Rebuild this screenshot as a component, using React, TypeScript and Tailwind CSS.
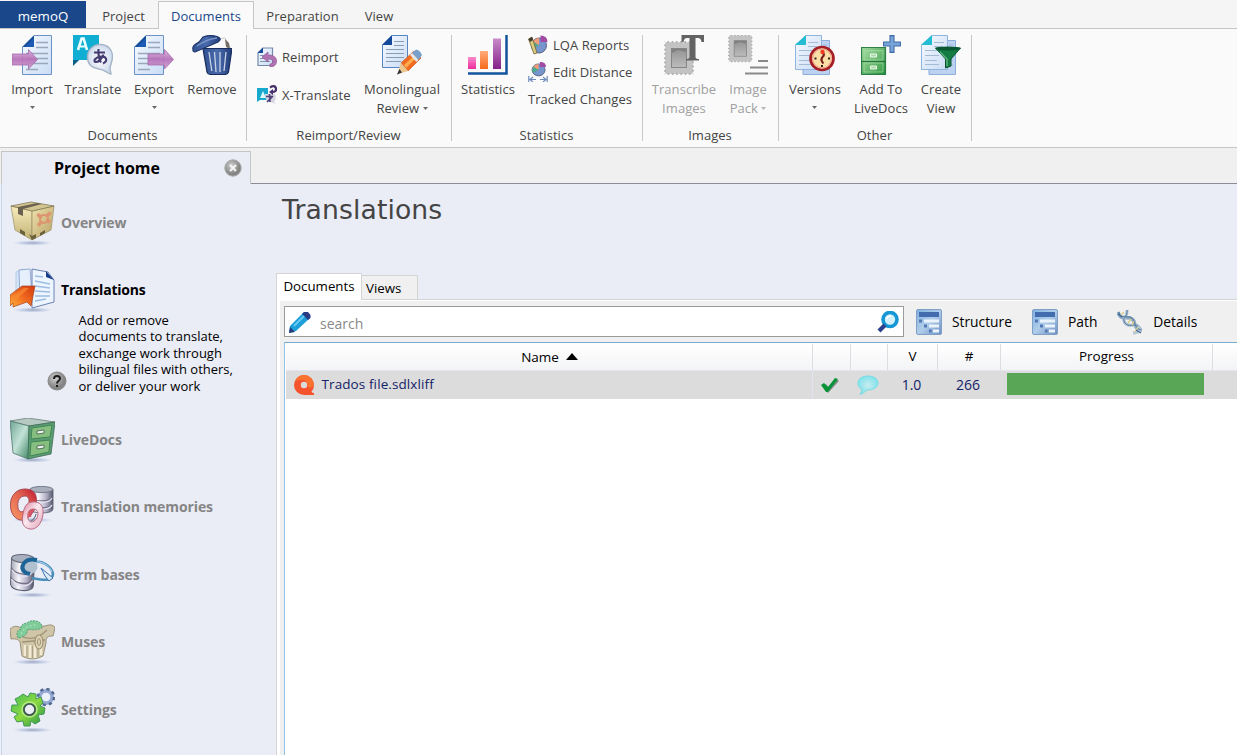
import React from "react";

type Kids = { children?: React.ReactNode };

/* ---------- gradients shared by the icons ---------- */
function Defs() {
  return (
    <svg width="0" height="0" className="absolute" aria-hidden="true">
      <defs>
        <linearGradient id="paper" x1="0" y1="0" x2="1" y2="1"><stop offset="0" stopColor="#f6faff" /><stop offset="1" stopColor="#c9dcf5" /></linearGradient>
        <linearGradient id="purple" x1="0" y1="0" x2="0" y2="1"><stop offset="0" stopColor="#dfb3dc" /><stop offset=".5" stopColor="#b56fb7" /><stop offset="1" stopColor="#cf9fd0" /></linearGradient>
        <linearGradient id="bar1" x1="0" y1="0" x2="0" y2="1"><stop offset="0" stopColor="#f78ccb" /><stop offset="1" stopColor="#ee2d9f" /></linearGradient>
        <linearGradient id="bar2" x1="0" y1="0" x2="0" y2="1"><stop offset="0" stopColor="#ffab7c" /><stop offset="1" stopColor="#f56a1c" /></linearGradient>
        <linearGradient id="bar3" x1="0" y1="0" x2="0" y2="1"><stop offset="0" stopColor="#c98cc9" /><stop offset="1" stopColor="#85208a" /></linearGradient>
        <linearGradient id="bin" x1="0" y1="0" x2="1" y2="0"><stop offset="0" stopColor="#31508f" /><stop offset=".5" stopColor="#4a6bac" /><stop offset="1" stopColor="#223c78" /></linearGradient>
        <linearGradient id="green" x1="0" y1="0" x2="1" y2="1"><stop offset="0" stopColor="#a3dba0" /><stop offset="1" stopColor="#1f8a36" /></linearGradient>
        <linearGradient id="drawer" x1="0" y1="0" x2="1" y2="1"><stop offset="0" stopColor="#9ed79c" /><stop offset="1" stopColor="#3fa04d" /></linearGradient>
        <linearGradient id="gear" x1="0" y1="0" x2="1" y2="1"><stop offset="0" stopColor="#47bf57" /><stop offset=".5" stopColor="#8cd840" /><stop offset="1" stopColor="#239348" /></linearGradient>
        <linearGradient id="metal" x1="0" y1="0" x2="1" y2="0"><stop offset="0" stopColor="#a9a9b8" /><stop offset=".35" stopColor="#f8f8fc" /><stop offset=".7" stopColor="#b3b1c6" /><stop offset="1" stopColor="#53566a" /></linearGradient>
        <linearGradient id="boxL" x1="0" y1="0" x2="0" y2="1"><stop offset="0" stopColor="#f7edbc" /><stop offset="1" stopColor="#c1b174" /></linearGradient>
        <linearGradient id="boxR" x1="0" y1="0" x2="1" y2="1"><stop offset="0" stopColor="#efe0ab" /><stop offset="1" stopColor="#b6a266" /></linearGradient>
        <linearGradient id="cabL" x1="0" y1="0" x2="1" y2="1"><stop offset="0" stopColor="#6fa595" /><stop offset=".5" stopColor="#c3e2d7" /><stop offset="1" stopColor="#3f8764" /></linearGradient>
        <linearGradient id="orange" x1="0" y1="1" x2="1" y2="0"><stop offset="0" stopColor="#ffb13b" /><stop offset=".5" stopColor="#f0691e" /><stop offset="1" stopColor="#d23a12" /></linearGradient>
        <linearGradient id="ring" x1="0" y1="1" x2="1" y2="0"><stop offset="0" stopColor="#fa9b66" /><stop offset=".6" stopColor="#e0604f" /><stop offset="1" stopColor="#c0142f" /></linearGradient>
        <linearGradient id="ring2" x1="0" y1="0" x2="1" y2="1"><stop offset="0" stopColor="#dd7f9b" /><stop offset=".45" stopColor="#faeaf0" /><stop offset="1" stopColor="#e2a0b6" /></linearGradient>
        <linearGradient id="tree" x1="0" y1="0" x2="1" y2="1"><stop offset="0" stopColor="#7fb0e0" /><stop offset=".5" stopColor="#b0cdea" /><stop offset="1" stopColor="#6a8fc2" /></linearGradient>
        <linearGradient id="stamp" x1="0" y1="0" x2="0" y2="1"><stop offset="0" stopColor="#929292" /><stop offset="1" stopColor="#bcbcbc" /></linearGradient>
        <radialGradient id="bubble"><stop offset="0" stopColor="#ffffff" /><stop offset="1" stopColor="#cfdcee" /></radialGradient>
        <radialGradient id="gray" cx=".4" cy=".35"><stop offset="0" stopColor="#d0d0d0" /><stop offset="1" stopColor="#858585" /></radialGradient>
        <radialGradient id="shadow"><stop offset="0" stopColor="#8e93ac" stopOpacity=".8" /><stop offset=".6" stopColor="#b4c5e2" stopOpacity=".6" /><stop offset="1" stopColor="#c8d2ea" stopOpacity="0" /></radialGradient>
        <radialGradient id="aqua"><stop offset="0" stopColor="#c9ecf0" /><stop offset="1" stopColor="#82e2ea" /></radialGradient>
      </defs>
    </svg>
  );
}

const Big = ({ children }: Kids) => <svg viewBox="0 0 40 40" className="block h-10 w-10 shrink-0">{children}</svg>;
const Small = ({ children }: Kids) => <svg viewBox="0 0 20 20" className="block h-5 w-5 shrink-0">{children}</svg>;
const Nav = ({ children, low }: Kids & { low?: boolean }) => (
  <svg viewBox="0 0 45 45" className="block h-[45px] w-[45px] shrink-0">
    <ellipse cx="22.5" cy={low ? 35 : 42} rx="20" ry="2.600" fill="url(#shadow)" />
    {children}
  </svg>
);

/* ---------- ribbon icons ---------- */
const Page = ({ x = 10 }: { x?: number }) => (
  <g transform={`translate(${x} 0)`}>
    <path d="M12 .5H29.5V39.5H.5V12Z" fill="url(#paper)" stroke="#6d93c6" />
    <path d="M12 .5V12H.5Z" fill="#12499b" />
    <path d="M3 12 12 3V12Z" fill="#1d5cb4" />
    <path d="M14 7.500h12M14 12.500h12M4 18.500h22M4 23.500h22M4 28.500h22M4 34.500h12" stroke="#9aa7bb" strokeWidth="1.500" />
  </g>
);
const Arrow = () => <path d="M0 19H16.500V14.500L25.500 24.500 16.500 34V30H0Z" fill="url(#purple)" stroke="#a66bad" strokeWidth=".8" fillOpacity=".93" />;

const ImportIcon = () => <Big><Page /><Arrow /></Big>;
const ExportIcon = () => <Big><Page x={0} /><g transform="translate(14 0)"><Arrow /></g></Big>;

const TranslateIcon = () => (
  <Big>
    <path d="M0 0H26V25H6L0 30Z" fill="#10aed2" /><path d="M0 25H6L0 31Z" fill="#0b5e87" />
    <path d="M5 15 8.600 3.500h2L14 15" fill="none" stroke="#e9ffff" strokeWidth="2.600" /><path d="M7 11.500h5.500" stroke="#e9ffff" strokeWidth="2" />
    <path d="M27 9.500C35 9.500 39.500 15 39.500 21.500 39.500 27 37 30 37 34L38 39C34 38.500 32 34.500 26 34 19 33 14.500 29 14.500 22 14.500 15 20 9.500 27 9.500Z" fill="url(#bubble)" stroke="#a6b4c7" strokeWidth="1.400" />
    <path d="M21 17.500h11M25.500 14C25 20 26 24 28 27.500M30.500 19.500C29 24 25 27.500 22.500 27 20 26.500 22 22 28 21.500 34 21 35 26.500 30 28.500" fill="none" stroke="#433b70" strokeWidth="2.100" />
  </Big>
);
const RemoveIcon = () => (
  <Big>
    <path d="M12 14 20 5 33 3 39 14Z" fill="#fafafa" stroke="#c3c3c3" strokeWidth=".8" /><path d="M33 4 37 8 38 14 34 12Z" fill="#776e66" />
    <path d="M11 13.500H40L36.500 37Q36 39.500 32 39.500H20Q15.500 39.500 15 37Z" fill="url(#bin)" stroke="#172c5b" strokeWidth="1.200" />
    <path d="M17 17 19.800 36M22.500 17 24 37M28 17V37M34 17 32 36" stroke="#c9d4e8" strokeWidth="1.300" />
    <path d="M1 14Q-.500 11 7 7L11 2Q18-.500 25 1.500 31 3.500 26 7L3 17Q.5 17 1 14Z" fill="url(#bin)" stroke="#1c3267" strokeWidth="1.100" />
    <path d="M5 11Q15 4 25 3" stroke="#7c97cb" strokeWidth="1.300" fill="none" />
  </Big>
);
const ReimportIcon = () => (
  <Small>
    <path d="M6 1H15.500V18.500H1V6Z" fill="url(#paper)" stroke="#7489ab" strokeWidth="1.200" /><path d="M6 .5V6H.5Z" fill="#164b9b" />
    <path d="M3 8.500h10M3 11.500h10M3 14.500h10" stroke="#8293ac" />
    <path d="M5 10 11 5V8C17 8 19.500 10.500 19.500 14 19.500 18 17 20 13 20V17Q16 17 16 14.500 16 12 11 12V15Z" fill="#b372b4" stroke="#8f5a97" strokeWidth=".7" />
  </Small>
);
const XTranslateIcon = () => (
  <Small>
    <path d="M0 3H11V15H3L0 17Z" fill="#17a8cd" /><path d="M3 13 6 6 9 13Z" fill="#dcf9ff" />
    <path d="M8 9H18Q20 13 17 17L19 19 13 17Q8 16 8 9Z" fill="#d7d5e3" /><path d="M9 11.500h7M12.500 9 13 17M16 11 10 17" stroke="#50447b" strokeWidth="1.700" />
    <path d="M13 2.500Q18-.5 19 3.500 19.500 7 15 7" fill="none" stroke="#47326c" strokeWidth="2.300" /><path d="M16 4V10L12 7Z" fill="#47326c" />
  </Small>
);
const ReviewIcon = () => (
  <Big>
    <path d="M10 .500H25.500V32.500H.500V10Z" fill="url(#paper)" stroke="#5585c0" /><path d="M10 0V10H0Z" fill="#144a99" />
    <path d="M12 6.500h10M12 10.500h10M4 14.500h18M4 18.500h18M4 22.500h18M4 26.500h15" stroke="#8a9db6" strokeWidth="1.200" />
    <path d="M19 28 32 16 39 23 26 36Z" fill="#f26b21" stroke="#c5571f" strokeWidth=".7" /><path d="M22 30 34 19 36 21 24 33Z" fill="#ffac4d" />
    <path d="M19 28 26 36 15 39.500Z" fill="#edc78f" /><path d="M17.500 34 20 37.500 15 39.500Z" fill="#30363f" />
    <path d="M30 18 34 14.500Q38 15 40 20L36.500 25Z" fill="#799fcb" /><path d="M30 18 36.500 25 34.500 27 28 20Z" fill="#dfe7f1" />
  </Big>
);
const StatsIcon = () => (
  <Big>
    <path d="M0 22H8V34H0Z" fill="url(#bar1)" /><path d="M12 16H20V34H12Z" fill="url(#bar2)" /><path d="M25 3.500H33V34H25Z" fill="url(#bar3)" />
    <path d="M38.500 0V38.500H0" fill="none" stroke="#12539e" strokeWidth="2.500" />
  </Big>
);
const Pie = () => (
  <>
    <circle cx="11" cy="10.500" r="7.500" fill="#7595cc" stroke="#4d5475" strokeWidth=".9" />
    <path d="M11 10.500V3A7.500 7.500 0 0 0 5 6.500Z" fill="#f39b74" /><path d="M11 10.500 5 6.500A7.500 7.500 0 0 0 4.500 14Z" fill="#52a88a" />
    <path d="M12.500 7V.500Q19.500 .500 19.500 7Z" fill="#a24ba4" />
  </>
);
const LqaIcon = () => <Small><Pie /><path d="M.500 4 4 2 9 18 6 19Z" fill="#dccc7c" stroke="#6d623c" strokeWidth=".8" /><path d="M.500 4 4 2 5 5 2 7Z" fill="#423a30" /></Small>;
const EditIcon = () => <Small><g transform="translate(1 -.500) scale(.87 .8)"><Pie /></g><path d="M.800 14V20M19.200 14V20M2 17.500H8M12 17.500H18M5 15 2 17.500 5 20M15 15 18 17.500 15 20" fill="none" stroke="#6f8dbd" strokeWidth="1.200" /></Small>;

const Stamp = ({ s = 1, y = 6 }: { s?: number; y?: number }) => (
  <g transform={`translate(0 ${y}) scale(${s})`}>
    <rect x=".8" y=".8" width="28.400" height="32.400" fill="#c3c3c3" stroke="#a3a3a3" strokeWidth="1.300" />
    <rect x="0" y="0" width="30" height="34" fill="none" stroke="#fafafa" strokeWidth="3" strokeDasharray=".1 4.171" strokeDashoffset="-2" strokeLinecap="round" />
    <rect x="7.500" y="7.500" width="15" height="19" fill="url(#stamp)" stroke="#858585" /><path d="M8 12 14 9 22 11V8H8Z" fill="#808080" />
  </g>
);
const TranscribeIcon = () => <Big><Stamp /><path d="M17.500 0H40V7H37.500Q37 3 34 3H31.500V22Q31.500 24 35 24V25.500H22V24Q25.500 24 25.500 22V3H23Q20 3 19.500 7H17.500Z" fill="#636363" /></Big>;
const PackIcon = () => <Big><Stamp s={.82} y={-.5} /><path d="M30 26H40M22 32.500H40M17 38.500H40" stroke="#8a8a8a" strokeWidth="2" /></Big>;

const Pages = () => (
  <>
    <path d="M8 5.500H34.500V39.500H8Z" fill="#bdd2f1" stroke="#8daedb" />
    <path d="M11 .500H26.500V34.500H.500V10Z" fill="url(#paper)" stroke="#8fb5de" /><path d="M11 0V10H0Z" fill="#25bdd4" />
    <path d="M13 7.500h10M13 11.500h9M4 15.500h18M4 20.500h14M4 25.500h12M4 29.500h14" stroke="#a5bad3" strokeWidth="1.200" /><path d="M28 10h4M28 15h4M28 20h4M28 25h4M28 30h4" stroke="#9cb9de" />
  </>
);
const VersionsIcon = () => (
  <Big><Pages /><circle cx="27" cy="23.500" r="11.500" fill="#fbd3a1" stroke="#a51f24" strokeWidth="2.700" /><circle cx="27" cy="23.500" r="9.400" fill="#fae0a6" stroke="#f0a08e" />
    <path d="M27 17Q30.500 19.500 27.500 22 25 25 28.500 28.500" stroke="#781f1e" strokeWidth="2.200" fill="none" /><circle cx="27.500" cy="17" r="2.200" fill="#f13a24" /><path d="M19.500 23.500h2M33 23.500h2M26 31h2" stroke="#2d1e1e" strokeWidth="2" /></Big>
);
const AddIcon = () => (
  <Big>
    <path d="M.5 12.500H24.500V39.500H.500Z" fill="url(#green)" stroke="#2f8046" strokeWidth="1.200" />
    <path d="M3 15.500H22V25H3ZM3 28H22V37H3Z" fill="url(#drawer)" stroke="#a7dba5" strokeWidth=".7" /><path d="M0 26.500H25" stroke="#23733b" />
    <path d="M9.500 19h6v3h-6ZM9.500 31h6v3h-6Z" fill="#a9d8a6" stroke="#f6fff5" strokeWidth=".9" />
    <path d="M29 .600H33V7H39.400V11H33V17.400H29V11H22.600V7H29Z" fill="#76a5d9" stroke="#3f6ca5" strokeWidth="1.100" />
  </Big>
);
const ViewIcon = () => (
  <Big><Pages /><path d="M14.500 13H39.500L30 24V31L24.500 33V24Z" fill="#147b43" stroke="#0b5430" /><ellipse cx="27" cy="13.500" rx="12.500" ry="2" fill="#0b5933" /><path d="M19 17 26 24V31" stroke="#5fb57d" strokeWidth="1.400" fill="none" /></Big>
);

/* ---------- navigation icons ---------- */
const BoxIcon = () => (
  <Nav>
    <path d="M1 5 22 10V39L5 29Z" fill="url(#boxL)" stroke="#9a9168" strokeWidth=".7" /><path d="M22 10 44 5 41 29 22 39Z" fill="url(#boxR)" stroke="#9a8e62" strokeWidth=".7" />
    <path d="M1 5 21 1 44 5 22 10Z" fill="#d3c58f" stroke="#77704d" strokeWidth=".7" /><path d="M8 6 27 2 32 3 13 8V15L8 13Z" fill="#6b6150" />
    <path d="M10 28 15 31V35L10 32ZM30 32 35 29V32L30 35ZM19 33 22 35 26 33V37L22 39Z" fill="#6c613e" />
    <circle cx="34" cy="18" r="4" fill="none" stroke="#dd9470" strokeWidth="2" /><path d="M28.500 14 30.500 16M39.500 12.500 37.500 14.500M29 23.500 31 21.500M39 20.500 37.500 19.500" stroke="#dd9470" strokeWidth="3.500" strokeLinecap="round" />
  </Nav>
);
const DocsIcon = () => (
  <Nav>
    <path d="M6 4 13 1V17L6 27Z" fill="#d4e4f7" stroke="#a8c1e3" strokeWidth=".7" /><path d="M9 2 20 1 22 27 10 33Z" fill="#e6effc" stroke="#7f9bc9" strokeWidth=".8" />
    <path d="M22 1 38 4 44 12V34L22 40Z" fill="#edf5ff" stroke="#6a82b4" /><path d="M36 3 44 12 36 9Z" fill="#173d8a" />
    <path d="M25 8 33 9M25 13 40 16M25 18 40 20M25 23 40 24M25 28 40 28M25 33 36 31" stroke="#9dbce4" strokeWidth="1.300" />
    <path d="M0 27 12 18 25 18 21 38 17 34 3 39V35L0 38Z" fill="url(#orange)" stroke="#a34422" strokeWidth=".7" /><path d="M1 30 14 20 19 20 5 33Z" fill="#fa8a33" opacity=".7" />
  </Nav>
);
const CabinetIcon = () => (
  <Nav>
    <path d="M0 3 18 0 45 4 19 8Z" fill="#b5c9c2" stroke="#6a8279" strokeWidth=".8" />
    <path d="M0 3 19 8 18 41 3 35Z" fill="url(#cabL)" stroke="#4d786c" strokeWidth=".8" /><path d="M19 8 45 4 41 36 18 41Z" fill="#5a9c74" stroke="#3c6b52" strokeWidth=".8" />
    <path d="M22 10 42 7 40 19 21 21ZM21 24 40 22 39 34 20 38Z" fill="#86be80" stroke="#3c804f" strokeWidth=".9" />
    <path d="M27 13 34 12V15L27 16ZM27 28 34 27V30L27 31Z" fill="#f2f8f1" stroke="#3f5a49" strokeWidth=".8" />
  </Nav>
);
const Drum = () => (
  <><path d="M0 4V26Q1 31 12 31T23 26V4Z" fill="url(#metal)" stroke="#5b5d70" strokeWidth=".9" /><path d="M0 12Q4 17 12 17T23 12M0 20Q4 25 12 25T23 20" fill="none" stroke="#777184" strokeWidth="1.100" /><path d="M1 14Q5 19 12 19T22 14M1 22Q5 27 12 27T22 22" fill="none" stroke="#e4e0f2" strokeWidth="1.200" /><ellipse cx="11.500" cy="4" rx="11.500" ry="3.500" fill="#a9afbd" stroke="#636a7b" strokeWidth=".9" /></>
);
const MemoryIcon = () => (
  <Nav low>
    <g transform="translate(20 1) scale(1 .87)"><Drum /></g>
    <path fillRule="evenodd" d="M15 4C27 4 28 14 25 23 22 31 16 36 10 35 2 33-1 23 1 15 3 8 8 4 15 4ZM15 11C9 11 7 17 8 23 9 28 13 28 17 23 20 18 20 11 15 11Z" fill="url(#ring)" stroke="#a04450" strokeWidth=".9" />
    <path fillRule="evenodd" d="M22 17C30 16 34 21 33 29 32 39 26 45 20 44 13 43 11 37 13 29 14 22 17 17 22 17ZM23 24C18 24 17 30 18 34 20 39 25 37 27 33 29 28 28 24 23 24Z" fill="url(#ring2)" stroke="#b3607a" strokeWidth=".9" /><path d="M20 32Q20 26 24 25.500" fill="none" stroke="#d4526e" strokeWidth="2.400" /><path d="M26 29Q25 34 21 36" fill="none" stroke="#6a6d80" strokeWidth="1.200" />
  </Nav>
);
const TermIcon = () => (
  <Nav>
    <g transform="translate(1 1) scale(1 1.180) rotate(3 12 15)"><Drum /></g>
    <path d="M24 10C30 6 42 13 43 21 42 29 33 27 22 25" fill="none" stroke="#4a8fbb" strokeWidth="2.600" /><path d="M25 9.500C31 7 40 13 42 19" fill="none" stroke="#b5dbef" strokeWidth="1" />
    <circle cx="21" cy="14" r="6.500" fill="#b1c0cf" /><path d="M27 7Q18 5 14 10 10 16 16 20L20 21" fill="none" stroke="#1d6597" strokeWidth="4" /><path d="M31 15 43 25 39 28 35 23Z" fill="#dceaf6" stroke="#3a72ad" />
  </Nav>
);
const MuseIcon = () => (
  <Nav>
    <path d="M0 9Q5 4 11 8L35 6Q43 3 45 8L43 16Q35 15 36 23L33 36Q22 42 12 36L10 22Q8 18 1 19Z" fill="#cfc5a8" stroke="#958a6f" strokeWidth=".9" />
    <path d="M11 16Q24 23 37 10M12 22 35 20" fill="none" stroke="#a09476" strokeWidth="1.300" /><path d="M15 25V36M20 25V38M25 25V38M31 25V35" stroke="#f2ead3" strokeWidth="2.500" /><path d="M17 26V37M22.500 26V38M28 26V37" stroke="#aa9f82" />
    <ellipse cx="29" cy="22" rx="4" ry="7" fill="#ded5b9" stroke="#a09474" strokeWidth="1.200" /><ellipse cx="29" cy="22" rx="1.500" ry="3.500" fill="none" stroke="#a09474" /><path d="M8 18Q5 11 11 9 10 4 17 3 20 0 26 1 32 2 32 8 25 11 18 9 17 17 8 18Z" fill="#7fcc9a" stroke="#56a074" strokeDasharray="2 1" /><path d="M11 14Q15 5 27 5" fill="none" stroke="#a5e2b3" strokeWidth="1.300" strokeDasharray="2 2" />
  </Nav>
);
const SettingsIcon = () => (
  <Nav>
    <g><circle cx="36" cy="9" r="6" fill="none" stroke="#95a9d2" strokeWidth="4" /><circle cx="36" cy="9" r="8" fill="none" stroke="#536a91" strokeWidth="2.500" strokeDasharray="3.200 3.100" /><circle cx="36" cy="9" r="4.300" fill="#eaf1fb" /></g>
    <path d="M9 9 13 6 18 9 20 5 26 6 26 11 31 9 33 15 30 18 35 20 34 26 28 27 30 33 25 36 21 33 20 38 14 38 13 33 7 34 4 29 8 26 1 23 2 17 8 17 5 11Z" fill="url(#gear)" stroke="#35934f" strokeWidth=".9" strokeLinejoin="round" />
    <circle cx="19.500" cy="21.500" r="7.500" fill="#58a63f" stroke="#b9eb86" strokeWidth="1.500" /><circle cx="19.500" cy="21.500" r="5.500" fill="#eaecf6" stroke="#3d554e" strokeWidth="1.600" />
  </Nav>
);

/* ---------- toolbar icons ---------- */
const TreeIcon = () => (
  <svg viewBox="0 0 26 26" className="block h-[26px] w-[26px] shrink-0">
    <rect x=".5" y=".500" width="25" height="25" rx="1.500" fill="url(#tree)" stroke="#7f9fc6" /><rect x="3" y="3" width="20" height="5" fill="#426cae" />
    <path d="M8 10.500H23V13.500H8ZM13 15.500H23V18.500H13ZM17 20.500H23V23.500H17Z" fill="#eaf3fb" /><path d="M3 10.500H6V13.500H3ZM8 15.500H11V18.500H8ZM13 20.500H15.500V23.500H13Z" fill="#5477b3" />
  </svg>
);
const DnaIcon = () => (
  <svg viewBox="0 0 26 26" className="block h-[26px] w-[26px] shrink-0" fill="none">
    <path d="M1 3C3 11 8 8 13 9 21 11 14 20 25 21" stroke="#8ea9c0" strokeWidth="3.500" /><path d="M10 1C11 9 4 8 8 14 12 19 17 14 21 17 25 20 22 24 16 24" stroke="#b4c7d4" strokeWidth="3.200" />
    <path d="M10 1C11 9 4 8 8 14 12 19 17 14 21 17M2 3C3 10 8 7 13 8 20 11 15 18 24 21" stroke="#4f74a0" strokeWidth="1" />
    <path d="M4 6 7 3M11 14 14 10M15 16 17 12M18 23 21 18" stroke="#d9cf8a" strokeWidth="1.400" /><path d="M1 5 5 8M19 21 24 24" stroke="#426899" strokeWidth="1.400" />
  </svg>
);
const PencilIcon = () => (
  <svg viewBox="0 0 22 22" className="block h-[22px] w-[22px] shrink-0"><path d="M1 15 15 1 21 7 7 20 0 22Z" fill="#1d9fda" /><path d="M15 1H19L21.500 4V7L19 9 13 3Z" fill="#2a3c83" /><path d="M5 15 15 5" stroke="#69cbf3" strokeWidth="2" /><path d="M0 22 1 16 6 21Z" fill="#273979" /></svg>
);
const SearchIcon = () => (
  <svg viewBox="0 0 22 22" className="block h-[22px] w-[22px] shrink-0"><circle cx="13" cy="8.500" r="7" fill="#d1f0fb" stroke="#1697d5" strokeWidth="3.600" /><path d="M8 14 2 20" stroke="#2c3f8c" strokeWidth="4.300" /><path d="M9.500 8Q10.500 5 14 5" stroke="#fff" strokeWidth="1.500" fill="none" /></svg>
);

const Caret = ({ light }: { light?: boolean }) => (
  <svg viewBox="0 0 5 3" className="inline-block h-[3px] w-[5px] align-[3px]"><path d="M0 0H5L2.500 3Z" fill={light ? "#b5b5b5" : "#686868"} /></svg>
);

/* ---------- ribbon parts ---------- */
function Group({ title, width, children }: Kids & { title: string; width: string }) {
  return (
    <section className={`flex h-[106px] shrink-0 flex-col border-r border-[#c6c6c6] ${width}`}>
      <div className="flex h-[90px]">{children}</div>
      <div className="h-4 pr-px text-center leading-[20px]">{title}</div>
    </section>
  );
}
function Action({ icon, width, children, muted }: Kids & { icon: React.ReactNode; width: string; muted?: boolean }) {
  return (
    <button className={`flex shrink-0 flex-col items-center whitespace-nowrap leading-[19px] ${width} ${muted ? "text-[#a0a0a0]" : ""}`}>
      {icon}
      <span className="mt-[5px] text-center">{children}</span>
    </button>
  );
}
const Under = () => <span className="flex h-[17px] items-center justify-center"><Caret /></span>;

function Ribbon() {
  return (
    <header className="h-[148px] shrink-0 border-b border-[#c6c6c6] bg-[#fafafa] text-[13px] tracking-[0.05px] text-[#444]">
      <nav className="flex h-[29px] bg-[#f5f5f5] leading-[29px]">
        <div className="mt-px w-[86px] border-b border-[#c6c6c6] bg-[#19478a] text-center text-[13.3px] leading-[30px] text-white">memoQ</div>
        <div className="mt-px w-[72px] border-b border-[#c6c6c6] pl-[3px] text-center leading-[30px]">Project</div>
        <div className="mt-px w-[96px] border border-b-0 border-[#c6c6c6] bg-[#fafafa] text-center leading-[29px] text-[#19478a]">Documents</div>
        <div className="mt-px flex grow border-b border-[#c6c6c6] leading-[30px]"><span className="w-[97px] text-center">Preparation</span><span className="w-[56px] text-center">View</span></div>
      </nav>
      <div className="flex pt-[6px]">
        <Group title="Documents" width="w-[247px]">
          <Action width="ml-0.5 w-[60px]" icon={<ImportIcon />}>Import<Under /></Action>
          <Action width="w-[62px]" icon={<TranslateIcon />}>Translate</Action>
          <Action width="w-[60px]" icon={<ExportIcon />}>Export<Under /></Action>
          <Action width="w-[56px]" icon={<RemoveIcon />}>Remove</Action>
        </Group>
        <Group title="Reimport/Review" width="w-[205px]">
          <div className="flex w-[114px] shrink-0 flex-col gap-[18px] pl-[10px] pt-3">
            <div className="flex items-center gap-[5px] leading-5"><ReimportIcon />Reimport</div>
            <div className="flex items-center gap-[5px] leading-5"><XTranslateIcon />X-Translate</div>
          </div>
          <Action width="w-[82px]" icon={<ReviewIcon />}>Monolingual<br />Review <Caret /></Action>
        </Group>
        <Group title="Statistics" width="w-[191px]">
          <Action width="w-[72px]" icon={<StatsIcon />}>Statistics</Action>
          <div className="flex flex-col gap-[7px] whitespace-nowrap pl-1 leading-5">
            <div className="flex items-center gap-[5px]"><LqaIcon />LQA Reports</div>
            <div className="flex items-center gap-[5px]"><EditIcon />Edit Distance</div>
            <div>Tracked Changes</div>
          </div>
        </Group>
        <Group title="Images" width="w-[136px]">
          <Action muted width="w-[82px]" icon={<TranscribeIcon />}>Transcribe<br />Images</Action>
          <Action muted width="w-[46px]" icon={<PackIcon />}>Image<br />Pack <Caret light /></Action>
        </Group>
        <Group title="Other" width="w-[193px]">
          <Action width="w-[72px]" icon={<VersionsIcon />}>Versions<Under /></Action>
          <Action width="w-[60px]" icon={<AddIcon />}>Add To<br />LiveDocs</Action>
          <Action width="w-[60px]" icon={<ViewIcon />}>Create<br />View</Action>
        </Group>
      </div>
    </header>
  );
}

/* ---------- sidebar ---------- */
function Entry({ icon, label, height, active }: { icon: React.ReactNode; label: string; height: string; active?: boolean }) {
  return (
    <div className={`flex shrink-0 items-start gap-[6px] pl-2 ${height}`}>
      {icon}
      <span className={`text-[14px] font-bold tracking-[-0.1px] ${active ? "leading-[43px] tracking-[-0.2px]! text-black" : "leading-[44px] text-[#858585]"}`}>{label}</span>
    </div>
  );
}

function Sidebar() {
  return (
    <aside className="ml-px mt-[3px] flex w-[250px] shrink-0 flex-col bg-[#eaecf6]">
      <div className="flex h-[33px] shrink-0 items-center border-x border-t border-[#c6c6c6]">
        <h2 className="w-[210px] text-center text-[16px] font-bold tracking-[-0.05px] text-black">Project home</h2>
        <svg viewBox="0 0 18 18" className="ml-3 block h-[18px] w-[18px]"><circle cx="9" cy="9" r="8.200" fill="url(#gray)" stroke="#aaa" /><path d="M6 6 12 12M12 6 6 12" stroke="#f5f5f5" strokeWidth="2" /></svg>
      </div>
      <div className="flex grow flex-col border-l border-[#c3d9f3] pt-[17px]">
        <Entry height="h-[67px]" icon={<BoxIcon />} label="Overview" />
        <Entry height="h-[45px]" icon={<DocsIcon />} label="Translations" active />
        <div className="flex h-[105px] shrink-0 items-end gap-3 pb-[24px] pl-[44.500px]">
          <svg viewBox="0 0 20 20" className="mb-[3px] block h-5 w-5 shrink-0"><circle cx="10" cy="10" r="9" fill="url(#gray)" stroke="#888" /><path d="M7 8Q7 5 10 5T13 7.500Q13 9 11.500 10 10 11 10 12.500M10 14V16" stroke="#1d1d1d" strokeWidth="2" fill="none" /></svg>
          <p className="whitespace-nowrap text-[13px] leading-[16.500px] text-black">Add or remove<br />documents to translate,<br />exchange work through<br />bilingual files with others,<br />or deliver your work</p>
        </div>
        <Entry height="h-[67px]" icon={<CabinetIcon />} label="LiveDocs" />
        <Entry height="h-[68px]" icon={<MemoryIcon />} label="Translation memories" />
        <Entry height="h-[67px]" icon={<TermIcon />} label="Term bases" />
        <Entry height="h-[68px]" icon={<MuseIcon />} label="Muses" />
        <Entry height="h-[50px]" icon={<SettingsIcon />} label="Settings" />
      </div>
    </aside>
  );
}

/* ---------- document list ---------- */
const GRID = "grid grid-cols-[527px_38px_37px_50px_63px_212px_1fr]";

function DocumentTable() {
  return (
    <div className="ml-1 mt-[5px] flex grow flex-col border-l border-t border-l-[#8fc4e8] border-t-[#78aad0] bg-white pl-px pt-px">
      <div className={`${GRID} h-[26px] bg-gradient-to-b from-white to-[#f3f4f6] text-center text-[13.500px] leading-[25px] text-black [&>div]:border-r [&>div]:border-[#dcdde0]`}>
        <div className="flex items-center justify-center gap-[7px] pl-[1px]">Name<svg viewBox="0 0 12 7" className="mb-0.5 h-[7px] w-3"><path d="M6 0 12 7H0Z" /></svg></div>
        <div /><div /><div>V</div><div>#</div><div>Progress</div><div className="border-r-0!" />
      </div>
      <div className="h-px bg-[#e5e5f2]" />
      <div className={`${GRID} h-[28px] items-stretch bg-[#dcdcdc] text-center text-[14px] leading-[27px] text-[#142368]`}>
        <div className="flex items-center gap-[7.500px] border-r border-[#e3e2f1] pl-2">
          <svg viewBox="0 0 20 20" className="h-5 w-5 shrink-0"><path fillRule="evenodd" d="M10 0A10 10 0 1 0 10 20H20V18Q18 18 17.500 16.500 20 14 20 10A10 10 0 0 0 10 0ZM10 6.800A3.200 3.200 0 1 1 10 13.200 3.200 3.200 0 0 1 10 6.800Z" fill="#f4532d" /><path d="M10 0A10 10 0 0 1 20 10Q18 14 14 12 14 6 9 5 3 5 1 6 4 0 10 0Z" fill="#fb712e" /></svg>
          <span className="pb-px text-[13.500px] tracking-[0.1px]">Trados file.sdlxliff</span>
        </div>
        <div className="flex items-center justify-start pl-2"><svg viewBox="0 0 18 16" className="h-4 w-[18px]"><path d="M2 10 7 16 18 4 15 2 8 11 5 7Z" fill="#85888a" /><path d="M0 8 3 6 7 10 14 1 17 2 7 15 5 15Z" fill="#079336" /></svg></div>
        <div className="flex items-center justify-start pl-1.5"><svg viewBox="0 0 22 20" className="h-5 w-[22px]"><path d="M11 1C17 1 21 4 21 8S17 15 10 15Q7 18 3 19.500 5 16 5 14C2 13 1 11 1 8 1 4 5 1 11 1Z" fill="url(#aqua)" stroke="#78dce4" /></svg></div>
        <div className="pr-[3px]">1.0</div><div className="pr-[3px]">266</div>
        <div className="pl-[6px] pt-[2px]"><div className="h-[22px] w-[197px] bg-[#5aa657]" /></div>
      </div>
    </div>
  );
}

function Workspace() {
  return (
    <main className="mt-[35px] flex min-w-0 grow flex-col overflow-hidden border-t border-[#8c8c98] bg-[#eaecf6] pl-[25px]">
      <h1 className="h-[89px] shrink-0 pl-[6px] pt-[4px] font-['DejaVu_Sans'] text-[26.670px] leading-[43px] tracking-[0.1px] text-[#444]">Translations</h1>
      <div className="flex h-[27px] shrink-0 items-end text-[13.300px] text-black">
        <div className="z-10 h-[27px] w-[86px] border border-b-0 border-[#d4d4d4] bg-white text-center leading-[24px]">Documents</div>
        <div className="h-[25px] w-[56px] border border-b-0 border-l-0 border-[#d4d4d4] bg-[#f0f0f0] pl-1 leading-[25px]">Views</div>
      </div>
      <div className="-mt-px flex grow flex-col border-l border-t border-[#d4d4d4] bg-white pl-[3px] pt-px">
        <div className="flex grow flex-col bg-[#f0f0f0] pt-[5px]">
          <div className="ml-1 flex h-[31px] items-center text-[13.800px] text-black">
            <div className="flex h-[31px] w-[620px] shrink-0 items-center border border-[#9b9b9b] bg-white pl-1 pr-[4px]">
              <PencilIcon /><span className="grow pl-[9px] pt-[3px] text-[14px] text-[#898989]">search</span><SearchIcon />
            </div>
            <div className="ml-3 flex items-center gap-[10px]"><TreeIcon /><span className="w-[60px] whitespace-nowrap pt-px">Structure</span></div>
            <div className="ml-5 flex items-center gap-[10px]"><TreeIcon /><span className="pt-px">Path</span></div>
            <div className="ml-5 flex items-center gap-[10px]"><DnaIcon /><span className="pt-px">Details</span></div>
          </div>
          <DocumentTable />
        </div>
      </div>
    </main>
  );
}

export default function App() {
  return (
    <div className="flex h-[755px] w-[1237px] flex-col overflow-hidden bg-[#f0f0f0] font-['Open_Sans','Noto_Sans',sans-serif]">
      <Defs />
      <Ribbon />
      <div className="flex min-h-0 grow">
        <Sidebar />
        <Workspace />
      </div>
    </div>
  );
}
